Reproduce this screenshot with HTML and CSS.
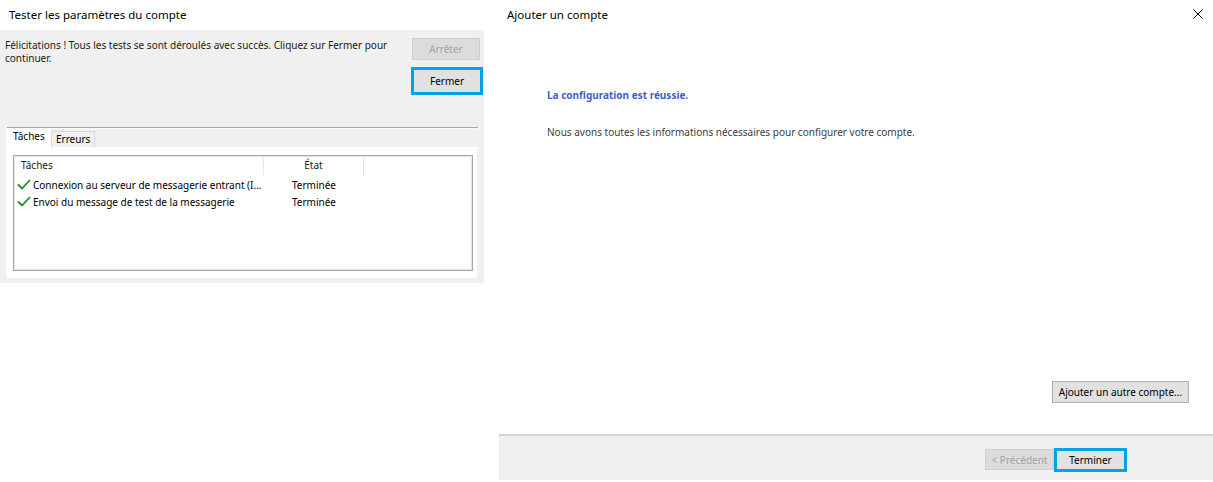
FILE: index.html
```html
<!DOCTYPE html>
<html lang="fr">
<head>
<meta charset="utf-8">
<title>Compte</title>
<link rel="stylesheet" href="styles.css">
</head>
<body>
<div class="page">
  <section class="test-dlg">
    <div class="dlg-title">Tester les paramètres du compte</div>
    <div class="test-body">
      <div class="test-top">
        <p class="msg">Félicitations ! Tous les tests se sont déroulés avec succès. Cliquez sur Fermer pour continuer.</p>
        <div class="btn-col">
          <button class="btn btn-disabled btn-stop">Arrêter</button>
          <div class="focus-ring"><button class="btn btn-inner">Fermer</button></div>
        </div>
      </div>
      <div class="separator"></div>
      <div class="tabs">
        <div class="tab tab-active">Tâches</div>
        <div class="tab">Erreurs</div>
      </div>
      <div class="tab-panel">
        <div class="listbox">
          <div class="lv-row lv-head">
            <div class="c1">Tâches</div>
            <div class="c2">État</div>
            <div class="c3"></div>
          </div>
          <div class="lv-row">
            <div class="c1"><svg class="check" viewBox="0 0 14 11" width="14" height="11"><path d="M1 5.5 L5 9.5 L13 1" fill="none" stroke="#1e8c2a" stroke-width="1.8"/></svg>Connexion au serveur de messagerie entrant (I...</div>
            <div class="c2">Terminée</div>
            <div class="c3"></div>
          </div>
          <div class="lv-row">
            <div class="c1"><svg class="check" viewBox="0 0 14 11" width="14" height="11"><path d="M1 5.5 L5 9.5 L13 1" fill="none" stroke="#1e8c2a" stroke-width="1.8"/></svg>Envoi du message de test de la messagerie</div>
            <div class="c2">Terminée</div>
            <div class="c3"></div>
          </div>
        </div>
      </div>
    </div>
  </section>

  <section class="add-dlg">
    <div class="add-title">
      <span>Ajouter un compte</span>
      <svg class="close" viewBox="0 0 10 10" width="10" height="10"><path d="M0.5 0.5 L9.5 9.5 M9.5 0.5 L0.5 9.5" stroke="#000" stroke-width="1" fill="none"/></svg>
    </div>
    <div class="add-content">
      <p class="success">La configuration est réussie.</p>
      <p class="info">Nous avons toutes les informations nécessaires pour configurer votre compte.</p>
      <div class="add-row">
        <button class="btn btn-another">Ajouter un autre compte...</button>
      </div>
    </div>
    <div class="footer">
      <button class="btn btn-disabled btn-prev">&lt; Précédent</button>
      <div class="focus-ring focus-finish"><button class="btn btn-inner btn-finish">Terminer</button></div>
    </div>
  </section>
</div>
</body>
</html>
```

FILE: styles.css
```css
* { box-sizing: border-box; }
html, body { margin: 0; padding: 0; background: #fff; }
body {
  font-family: "Noto Sans", "Open Sans", sans-serif;
  font-size: 10px;
  color: #000;
}
.page {
  width: 1213px;
  height: 482px;
  display: flex;
  overflow: hidden;
}
p { margin: 0; }

/* generic button */
.btn {
  font-family: inherit;
  font-size: 10px;
  margin: 0;
  padding: 0;
  background: #e1e1e1;
  border: 1px solid #adadad;
  color: #000;
  line-height: 1;
  white-space: nowrap;
}
.btn-disabled {
  background: #dcdcdc;
  border-color: #cfcfcf;
  color: #a3a3a3;
}
.focus-ring {
  border: 3px solid #00a2e8;
  display: flex;
}
.btn-inner {
  border: none;
  flex: 1;
}

/* left dialog */
.test-dlg {
  width: 484px;
  flex: none;
  display: flex;
  flex-direction: column;
}
.dlg-title {
  height: 30px;
  line-height: 30px;
  padding-left: 9px;
  font-size: 11.5px;
}
.test-body {
  background: #f0f0f0;
  height: 253px;
  padding: 9px 1px 0 0;
  display: flex;
  flex-direction: column;
}
.test-top {
  height: 88px;
  display: flex;
}
.msg {
  flex: 1;
  padding-left: 5px;
  padding-right: 8px;
  line-height: 13px;
  color: #1a1a1a;
}
.btn-col {
  width: 72px;
  display: flex;
  flex-direction: column;
  gap: 7px;
  margin-top: -1px;
}
.btn-stop {
  height: 22px;
  margin: 0 3px 0 1px;
}
.btn-col .focus-ring { height: 28px; }

.separator {
  margin: 0 5px 0 7px;
  height: 2px;
  border-top: 1px solid #a6a6a6;
  border-bottom: 1px solid #fbfbfb;
}
.tabs {
  display: flex;
  align-items: flex-end;
  height: 18px;
  padding-left: 6px;
}
.tab {
  height: 16px;
  line-height: 15px;
  padding: 0 4px;
  border: 1px solid #d9d9d9;
  border-bottom: none;
  background: #f0f0f0;
}
.tab-active {
  height: 18px;
  line-height: 13px;
  background: #fff;
  border-color: #fff;
  padding: 0 6px;
  width: 45px;
}
.tab-panel {
  background: #fff;
  margin: 0 6px 0 6px;
  height: 131px;
  padding: 8px 4px 7px 7px;
}
.listbox {
  height: 116px;
  border: 1px solid #a8a8ac;
  box-shadow: inset 0 0 0 1px #e4e4e4;
  padding: 1px;
}
.lv-row {
  display: flex;
  height: 17px;
  align-items: center;
}
.lv-head {
  height: 19px;
  align-items: flex-start;
  color: #1a1a1a;
}
.c1 {
  width: 249px;
  padding-left: 6px;
  display: flex;
  align-items: center;
  white-space: nowrap;
}
.lv-row .c1 { padding-left: 2px; }
.lv-head .c1 { padding-left: 6px; }
.check { margin-right: 2px; flex: none; }
.c2 {
  width: 100px;
  text-align: center;
}
.c3 { flex: 1; }
.lv-head .c1, .lv-head .c2 {
  height: 18px;
  line-height: 17px;
  border-right: 1px solid #e5e5e5;
}
.lv-head .c1 { display: block; }

/* right dialog */
.add-dlg {
  flex: 1;
  margin-left: 14px;
  display: flex;
  flex-direction: column;
}
.add-title {
  height: 28px;
  display: flex;
  align-items: center;
  justify-content: space-between;
  padding-left: 9px;
  padding-right: 10px;
  font-size: 11.5px;
}
.add-content {
  flex: 1;
  display: flex;
  flex-direction: column;
  padding: 60px 24px 31px 49px;
}
.success {
  font-weight: bold;
  color: #3d5fc9;
  line-height: 14px;
}
.info {
  margin-top: 23px;
  line-height: 14px;
  color: #3c3c3c;
}
.add-row {
  margin-top: auto;
  display: flex;
  justify-content: flex-end;
}
.btn-another {
  width: 137px;
  height: 22px;
}
.footer {
  height: 46px;
  margin-bottom: 2px;
  margin-left: 1px;
  border-top: 2px solid #d6d6d6;
  background: #f0f0f0;
  display: flex;
  align-items: flex-start;
  padding-top: 12px;
  padding-left: 486px;
}
.btn-prev {
  width: 69px;
  height: 21px;
  margin-top: 1px;
}
.focus-finish {
  width: 73px;
  height: 24px;
}
```
